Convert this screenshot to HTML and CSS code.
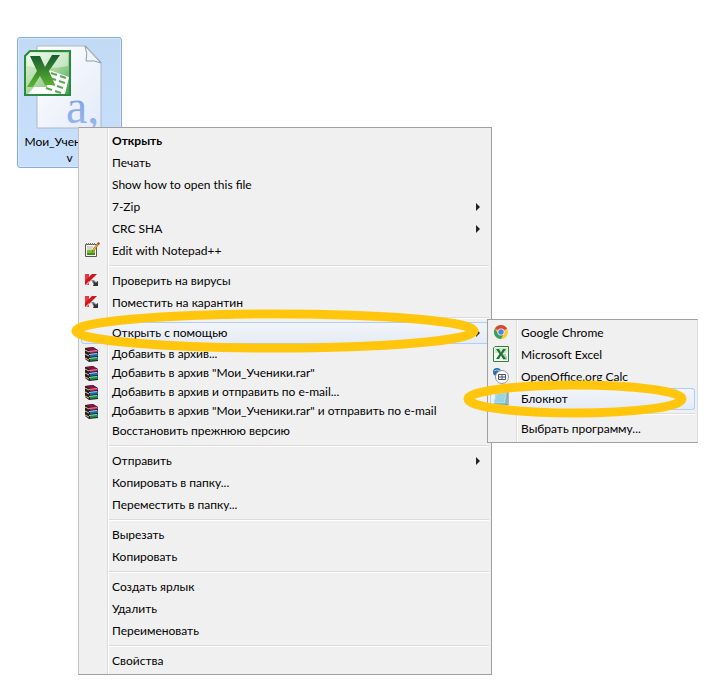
FILE: index.html
```
<!DOCTYPE html>
<html lang="ru">
<head>
  <meta charset="UTF-8" />
  <meta name="viewport" content="width=device-width, initial-scale=1.0"/>
  <title>Мои_Ученики.csv</title>
  <link rel="stylesheet" href="styles.css">
</head>
<body>
  <!-- Shared icons -->
  <svg class="sprite" aria-hidden="true">
    <symbol id="icon-kaspersky" viewBox="0 0 16 16">
      <path d="M1 2h4v11H1z" fill="#e23a3f"/>
      <path d="M1 13V9l7-7h5L5 10z" fill="#d4141c"/>
      <path d="M1 13l4-4v2l-2 2z" fill="#f0a0a0"/>
      <path d="M7 8h3l2 2 2-1v5H9l1-1z" fill="#8a8a8a"/>
      <path d="M9 14h5V9l-2 2-3-2 1 3z" fill="#333"/>
    </symbol>
    <symbol id="icon-rar" viewBox="0 0 16 16">
      <path d="M1 2l8-1 5 3v11l-9 1-4-3z" fill="#2a1a22"/>
      <path d="M2 2l7-1 4 3-7 1z" fill="#7f1838"/>
      <path d="M6 5l8-1v2l-8 1z" fill="#b32d62"/>
      <path d="M5 5l8-1v1l-8 1z" fill="#ef7aa8"/>
      <path d="M6 8l8-1v3l-8 1z" fill="#2268a8"/>
      <path d="M5 8l8-1v1l-8 1z" fill="#8fd0e8"/>
      <path d="M6 12l8-1v3l-8 1z" fill="#168a4c"/>
      <path d="M5 12l8-1v1l-8 1z" fill="#7fe0a0"/>
      <path d="M1 4l4 2M1 8l4 2M1 12l4 2" stroke="#d9c48c"/>
    </symbol>
    <symbol id="icon-excel" viewBox="0 0 16 16">
      <path d="M2 .5h13.500v15H.5V2z" fill="#f2f9ef" stroke="#2f8040"/>
      <path d="M2 2h12v5H2z" fill="#cfe8c6"/>
      <path d="M9 9h5v5H9z" fill="#fff"/>
      <path d="M10 9h3M10 11h4M10 13h4" stroke="#5eaa53"/>
      <path d="M3 3h3l2 3.500L10 3h3L9.500 8l3.500 5h-3L8 9.500 6 13H3l3.500-5z" fill="#207338"/>
    </symbol>
  </svg>

  <main class="desktop">
    <a class="file" href="#">
      <svg class="file-icon" viewBox="0 0 80 86" aria-hidden="true">
        <defs>
          <linearGradient id="paper" x1="0" y1="0" x2="1" y2="1">
            <stop offset="0" stop-color="#ffffff"/>
            <stop offset="1" stop-color="#e3ebf8"/>
          </linearGradient>
          <linearGradient id="green" x1="0" y1="0" x2="1" y2="1">
            <stop offset="0" stop-color="#e6f5dc"/>
            <stop offset=".55" stop-color="#a3d69c"/>
            <stop offset="1" stop-color="#3a9c4c"/>
          </linearGradient>
          <linearGradient id="cross" x1="0" y1="0" x2="0" y2="1">
            <stop offset="0" stop-color="#145c2e"/>
            <stop offset="1" stop-color="#5fb52f"/>
          </linearGradient>
          <linearGradient id="letter" x1="0" y1="0" x2="0" y2="1">
            <stop offset="0" stop-color="#6f96e0"/>
            <stop offset="1" stop-color="#9dbcf0"/>
          </linearGradient>
        </defs>
        <path d="M15 2h49l15 16v66H15z" fill="url(#paper)" stroke="#a9b8cd"/>
        <path d="M63 2q3 8 1 15 9-1 15 2z" fill="#f1f3f6" stroke="#8f9cae"/>
        <text class="file-letter" x="44" y="79">a,</text>
        <path d="M8 7h40v44H3V12z" fill="url(#green)" stroke="#2c8a3c" stroke-width="2"/>
        <path d="M8 9h38v13Q26 26 5 22v-9z" fill="#fff" opacity=".45"/>
        <path d="M27 26l20 7-4 17H6l6-7h13z" fill="#fff"/>
        <path d="M29 29l6 2M38 32l6 2M28 34l6 2M37 37l6 2M27 39l6 2M35 42l6 2M24 44l6 2M33 47l6 2" stroke="#5aa952" stroke-width="2"/>
        <path d="M8 12h10l5 11 7-12h8L27 27l6 14H23l-5-9-7 11H5l10-16z" fill="url(#cross)"/>
      </svg>
      <span class="file-name">Мои_Ученики.cs<br>v</span>
    </a>

    <div class="menu context-menu" role="menu">
      <button class="item default" role="menuitem">Открыть</button>
      <button class="item" role="menuitem">Печать</button>
      <button class="item" role="menuitem">Show how to open this file</button>
      <button class="item has-sub" role="menuitem">7-Zip</button>
      <button class="item has-sub" role="menuitem">CRC SHA</button>
      <button class="item" role="menuitem">
        <svg class="icon" viewBox="0 0 16 16" aria-hidden="true">
          <path d="M1.500 2.500h11v12h-11z" fill="#fbfdf6" stroke="#555"/>
          <path d="M3 8h8v5H3z" fill="#78c62c"/>
          <path d="M3 11h8v2H3z" fill="#3f8f20"/>
          <path d="M3 5h6M3 7h5" stroke="#a9b3a0"/>
          <path d="M2 2h1M4 2h1M6 2h1M8 2h1M10 2h1" stroke="#777" stroke-width="2"/>
          <path d="M8 10l1-3 5-6 1 1-5 7z" fill="#e8b32c" stroke="#7d4a13" stroke-width=".5"/>
          <path d="M13 2l1-2 2 1-1 2z" fill="#c0392b"/>
        </svg>
        Edit with Notepad++
      </button>
      <hr class="line">
      <button class="item" role="menuitem">
        <svg class="icon" aria-hidden="true"><use href="#icon-kaspersky"/></svg>
        Проверить на вирусы
      </button>
      <button class="item" role="menuitem">
        <svg class="icon" aria-hidden="true"><use href="#icon-kaspersky"/></svg>
        Поместить на карантин
      </button>
      <hr class="line">

      <div class="sub-wrap">
        <button class="item has-sub active" role="menuitem" aria-haspopup="true" aria-expanded="true">Открыть с помощью</button>
        <svg class="mark mark-main" viewBox="0 0 408 44" preserveAspectRatio="none" aria-hidden="true">
          <ellipse cx="204" cy="22" rx="199" ry="17"/>
        </svg>

        <div class="menu submenu" role="menu">
          <button class="item" role="menuitem">
            <svg class="icon" viewBox="0 0 16 16" aria-hidden="true">
              <circle cx="8" cy="8" r="7" fill="#fbc934"/>
              <path d="M8 8L1.900 4.500A7 7 0 0 1 14.100 4.500z" fill="#d8473a"/>
              <path d="M1.900 4.500A7 7 0 0 0 8 15l3-5.500H5z" fill="#36a05a"/>
              <circle cx="8" cy="8" r="3.500" fill="#f4f4f4"/>
              <circle cx="8" cy="8" r="2.700" fill="#4a86e0"/>
            </svg>
            Google Chrome
          </button>
          <button class="item" role="menuitem">
            <svg class="icon" aria-hidden="true"><use href="#icon-excel"/></svg>
            Microsoft Excel
          </button>
          <button class="item" role="menuitem">
            <svg class="icon" viewBox="0 0 16 16" aria-hidden="true">
              <circle cx="4" cy="4" r="4" fill="#2b6ca8"/>
              <path d="M1 3q3-2 6 0" fill="none" stroke="#8fc0e6"/>
              <circle cx="9" cy="9" r="6.500" fill="#fff" stroke="#8a98a8"/>
              <path d="M5.500 6.500h7v5h-7zM5.500 9h7M9 6.500v5" fill="none" stroke="#445566"/>
            </svg>
            OpenOffice.org Calc
          </button>
          <button class="item active" role="menuitem">
            <svg class="icon" viewBox="0 0 16 16" aria-hidden="true">
              <path d="M3 1h12l-1 14H1z" fill="#7dbccb"/>
              <path d="M3 1h11l-2 12H1z" fill="#a9deea"/>
              <path d="M4 5h8M3 7h9M3 9h8M2 11h9" stroke="#6fb3c6" stroke-width=".5"/>
              <path d="M15 2v13h-3" fill="none" stroke="#8b7c66"/>
            </svg>
            Блокнот
          </button>
          <hr class="line">
          <button class="item" role="menuitem">Выбрать программу...</button>
          <svg class="mark mark-sub" viewBox="0 0 224 38" preserveAspectRatio="none" aria-hidden="true">
            <ellipse cx="112" cy="19" rx="107" ry="14"/>
          </svg>
        </div>
      </div>

      <button class="item compact" role="menuitem">
        <svg class="icon" aria-hidden="true"><use href="#icon-rar"/></svg>
        Добавить в архив...
      </button>
      <button class="item compact" role="menuitem">
        <svg class="icon" aria-hidden="true"><use href="#icon-rar"/></svg>
        Добавить в архив "Мои_Ученики.rar"
      </button>
      <button class="item compact" role="menuitem">
        <svg class="icon" aria-hidden="true"><use href="#icon-rar"/></svg>
        Добавить в архив и отправить по e-mail...
      </button>
      <button class="item compact" role="menuitem">
        <svg class="icon" aria-hidden="true"><use href="#icon-rar"/></svg>
        Добавить в архив "Мои_Ученики.rar" и отправить по e-mail
      </button>
      <button class="item" role="menuitem">Восстановить прежнюю версию</button>
      <hr class="line">
      <button class="item has-sub" role="menuitem">Отправить</button>
      <button class="item" role="menuitem">Копировать в папку...</button>
      <button class="item" role="menuitem">Переместить в папку...</button>
      <hr class="line">
      <button class="item" role="menuitem">Вырезать</button>
      <button class="item" role="menuitem">Копировать</button>
      <hr class="line">
      <button class="item" role="menuitem">Создать ярлык</button>
      <button class="item" role="menuitem">Удалить</button>
      <button class="item" role="menuitem">Переименовать</button>
      <hr class="line">
      <button class="item" role="menuitem">Свойства</button>
    </div>
  </main>
</body>
</html>
```
FILE: styles.css
```
* {
  box-sizing: border-box;
}

body {
  margin: 0;
  background: #fff;
  font-family: "Segoe UI", Lato, sans-serif;
  font-size: 12px;
  color: #000;
}

.sprite {
  position: absolute;
  width: 0;
  height: 0;
}

.desktop {
  position: relative;
  min-height: 100vh;
  padding: 37px 17px;
}

/* File on the desktop */
.file {
  display: flex;
  flex-direction: column;
  width: 105px;
  padding: 6px 4px 1px;
  border: 1px solid #84acdd;
  border-radius: 3px;
  background: linear-gradient(#c3daf5, #c9e0fc);
  box-shadow: inset 0 0 0 1px #d8e8fb;
  color: #000;
  text-decoration: none;
}

.file-icon {
  width: 80px;
  height: 86px;
  overflow: visible;
}

.file-letter {
  font-family: "Liberation Serif", serif;
  font-size: 48px;
  fill: url(#letter);
}

.file-name {
  margin-top: 4px;
  line-height: 16px;
  text-align: center;
  white-space: nowrap;
}

/* Menus */
.menu {
  position: absolute;
  padding: 2px;
  border: 1px solid #a0a0a0;
  background: linear-gradient(90deg, #f0f0f0 28px, #dcdcdc 28px, #dcdcdc 29px, #fff 29px, #fff 30px, #f0f0f0 30px);
}

.context-menu {
  top: 127px;
  left: 78px;
  min-width: 414px;
  border-left-color: #c4c4c4;
}

.submenu {
  top: -3px;
  left: 100%;
  z-index: 2;
  min-width: 211px;
  margin-left: -2px;
  border-right-color: #dadada;
}

.item {
  position: relative;
  display: flex;
  align-items: center;
  width: 100%;
  height: 22px;
  padding: 0 30px 2px 31px;
  border: 1px solid transparent;
  border-width: 1px 0;
  border-radius: 3px;
  background: none;
  font: inherit;
  color: inherit;
  text-align: left;
  white-space: nowrap;
}

.compact {
  height: 19px;
  padding-bottom: 0;
}

.default {
  font-weight: bold;
}

.active,
.item:hover {
  border-color: #aecff7;
  background: linear-gradient(#f2f4f8, #e5ebf5);
  box-shadow: inset 1px 0 #aecff7, inset -1px 0 #aecff7;
}

.has-sub::after {
  content: "";
  position: absolute;
  top: 6px;
  right: 9px;
  border: 4px solid transparent;
  border-left-color: #222;
  border-right: 0;
}

.icon {
  position: absolute;
  left: 3px;
  width: 16px;
  height: 16px;
}

.line {
  height: 2px;
  margin: 3px 0 3px 28px;
  border: 0;
  border-top: 1px solid #dcdcdc;
  background: #fff;
}

.sub-wrap {
  position: relative;
}

/* Marker rings */
.mark {
  position: absolute;
  z-index: 1;
  fill: none;
  stroke: #ffc60d;
  stroke-width: 9px;
  pointer-events: none;
}

.mark-main {
  top: -13px;
  left: -10px;
  width: 408px;
  height: 44px;
}

.mark-sub {
  top: 60px;
  left: -25px;
  width: 224px;
  height: 38px;
}
```
